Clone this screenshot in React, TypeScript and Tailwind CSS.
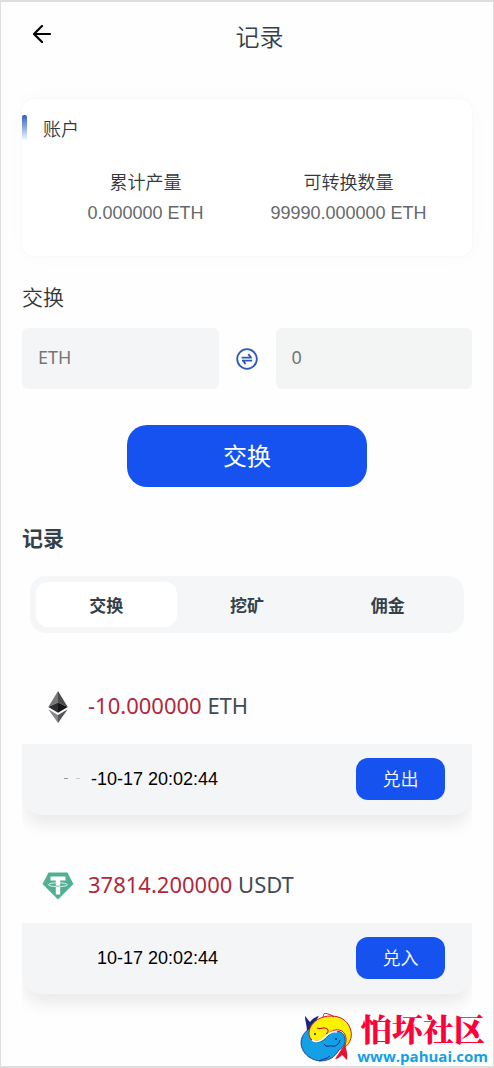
import React from "react";

type RecordItem = {
  id: string;
  amount: string;
  unit: string;
  time: string;
  action: string;
  icon: React.ReactNode;
  masked?: boolean;
};

function EthIcon() {
  return (
    <svg viewBox="0 0 20 32" className="h-8 w-5" aria-hidden="true">
      <path d="M10 0 0.3 16 10 11.6Z" fill="#77787a" />
      <path d="M10 0v11.6L19.7 16Z" fill="#4b4b4d" />
      <path d="M10 11.6 0.3 16 10 21.8Z" fill="#2e2e30" />
      <path d="M10 11.6 19.7 16 10 21.8Z" fill="#161618" />
      <path d="M0.3 18.2 10 24v8Z" fill="#858688" />
      <path d="M19.7 18.2 10 24v8Z" fill="#55565a" />
    </svg>
  );
}

function TetherIcon() {
  return (
    <svg viewBox="0 0 32 28" className="h-7 w-8" aria-hidden="true">
      <path d="M6.6 0.5h18.8L31.5 12 16 27.5 0.5 12Z" fill="#53ae94" />
      <path d="M8.5 4.5h15v4h-5.3v14h-4.4v-14H8.5Z" fill="#fff" />
      <ellipse cx="16" cy="12.7" rx="9.6" ry="1.9" fill="none" stroke="#fff" strokeWidth="0.8" />
      <path d="M13.8 14q2.2.3 4.4 0" fill="none" stroke="#53ae94" strokeWidth="0.8" />
    </svg>
  );
}

function SwapIcon() {
  return (
    <svg
      viewBox="0 0 22 22"
      className="size-[22px]"
      fill="none"
      stroke="#2a59b8"
      strokeWidth="1.8"
      aria-hidden="true"
    >
      <circle cx="11" cy="11" r="9.8" />
      <path d="M5.6 9.6h10.2M15.2 9.9l-2.8-3.8M16.2 12.6H6M6.8 12.3l2.8 3.8" />
    </svg>
  );
}

function FishLogo() {
  return (
    <svg viewBox="0 0 54 50" className="h-[50px] w-[54px]" aria-hidden="true">
      <path d="M6 3c2 2 3 4 5 6 2-3 5-5 9-6-3 4-4 8-7 13l-5 3C8 12 6 8 6 3Z" fill="#17277c" />
      <path
        d="M11 15C4 20 0 27 3 35c3 8 10 12 18 13 9 0 15-4 19-11 5-3 7-7 6-12-1-5-6-8-11-6-5 1-7 6-12 9-5 2-11 1-12-4-1-3-1-6 0-9Z"
        fill="#14a0e4"
        stroke="#17277c"
        strokeWidth="0.8"
      />
      <path
        d="M45 35c7-5 9-13 6-20C48 7 41 3 32 3c-10 0-18 5-21 12-2 6-1 11 4 13 5 1 9-1 12-5 4-4 8-7 13-6 7 1 9 10 5 18Z"
        fill="#fff200"
        stroke="#d4122c"
        strokeWidth="1"
      />
      <path
        d="M13 27c4 3 9 1 13-3 4-4 8-6 12-5"
        fill="none"
        stroke="#fff"
        strokeWidth="1.6"
      />
      <path d="M24 4c1-2 0-3 2-4 3 1 7 2 9 4" fill="none" stroke="#d4122c" strokeWidth="1" />
      <path d="M18 15c4 2 5-1 8 0 4 1 4 4 1 6" fill="none" stroke="#d4122c" strokeWidth="1.1" />
      <path d="M25 31c2 4 6 1 8 2 4 1 7-2 8-6" fill="none" stroke="#17277c" strokeWidth="1" />
      <path d="M20 48c3-2 8-2 11-5" fill="none" stroke="#17277c" strokeWidth="1" />
      <circle cx="16" cy="21" r="1.1" fill="#17277c" />
      <circle cx="37" cy="26" r="1.1" fill="#17277c" />
      <path d="M46 31c1 5 3 9 2 16-2-2-3-3-5-5-2 2-4 4-7 4 3-5 6-9 10-15Z" fill="#e6142d" />
    </svg>
  );
}

const records: RecordItem[] = [
  {
    id: "eth",
    amount: "-10.000000",
    unit: "ETH",
    time: "-10-17 20:02:44",
    action: "兑出",
    icon: <EthIcon />,
    masked: true,
  },
  {
    id: "usdt",
    amount: "37814.200000",
    unit: "USDT",
    time: "10-17 20:02:44",
    action: "兑入",
    icon: <TetherIcon />,
  },
];

const tabs = ["交换", "挖矿", "佣金"];

function Stat({ label, value }: { label: string; value: string }) {
  return (
    <div className="flex-1 text-center">
      <dt className="text-lg leading-8 text-[#33383c]">{label}</dt>
      <dd className="font-['Liberation_Sans',sans-serif] text-lg leading-8 font-normal text-[#66696c]">
        {value}
      </dd>
    </div>
  );
}

function RecordCard({ item }: { item: RecordItem }) {
  return (
    <li className="overflow-hidden pb-8">
      <div className="flex h-[76px] items-center gap-[14px] pl-5">
        <span className="flex w-8 justify-center pt-[2px]">{item.icon}</span>
        <p className="pb-[2px] font-['Noto_Sans',sans-serif] text-[22px] leading-8 font-normal text-[#414b54]">
          <span className="text-[#b0283c]">{item.amount}</span> {item.unit}
        </p>
      </div>
      <div className="flex h-[71px] items-center rounded-b-[20px] bg-[#f4f5f6] pr-[27px] pb-[2px] pl-[42px] shadow-[0_12px_16px_-2px_rgba(0,0,0,0.08)]">
        <span className="flex w-[27px] shrink-0 items-center gap-2" aria-hidden="true">
          {item.masked && (
            <>
              <i className="h-px w-1 bg-[#999]" />
              <i className="h-px w-1 bg-[#ccc]" />
            </>
          )}
        </span>
        <time className="w-[127px] text-right font-['Liberation_Sans',sans-serif] text-lg font-normal whitespace-nowrap text-black">
          {item.time}
        </time>
        <button
          type="button"
          className="ml-auto h-[42px] w-[89px] rounded-xl bg-[#1652f0] pb-[2px] text-lg font-[350] text-white"
        >
          {item.action}
        </button>
      </div>
    </li>
  );
}

export default function App() {
  return (
    <div className="relative min-h-screen border-x border-t-2 border-b-2 border-[#dedede] bg-[#fefefe] px-[21px] font-['Noto_Sans_CJK_SC',sans-serif] font-[350] text-[#33383c]">
      <header className="flex h-[68px] items-center">
        <button type="button" aria-label="返回" className="-mt-1 ml-[11px]">
          <svg
            viewBox="0 0 18 18"
            className="size-[18px]"
            fill="none"
            stroke="#000"
            strokeWidth="2.2"
            strokeLinecap="round"
            strokeLinejoin="round"
            aria-hidden="true"
          >
            <path d="M17 9H1M9 1 1 9l8 8" />
          </svg>
        </button>
        <h1 className="flex-1 pr-1 text-center text-2xl font-[350] text-[#33404a]">记录</h1>
      </header>

      <main>
        <section className="mt-[29px] flex h-[157px] flex-col rounded-xl bg-white shadow-[0_0_24px_rgba(0,0,0,0.02),0_0_2px_rgba(0,0,0,0.06)]">
          <div className="mt-4 flex gap-4">
            <span className="h-[26px] w-[5px] rounded-t-xs bg-linear-to-b from-[#2f5fc4] to-white" />
            <h2 className="text-lg leading-[26px] font-[350]">账户</h2>
          </div>
          <dl className="mt-6 flex px-[22px]">
            <Stat label="累计产量" value="0.000000 ETH" />
            <Stat label="可转换数量" value="99990.000000 ETH" />
          </dl>
        </section>

        <section className="mt-6">
          <h2 className="text-[21px] leading-8 font-[350]">交换</h2>
          <form onSubmit={(event) => event.preventDefault()}>
            <div className="mt-4 flex items-center">
              <input
                type="text"
                aria-label="币种"
                placeholder="ETH"
                className="h-[61px] min-w-0 flex-1 rounded-md bg-[#f4f5f6] px-4 pb-[4px] font-['Noto_Sans',sans-serif] text-lg font-normal placeholder:text-[#757575]"
              />
              <span className="flex w-[57px] justify-center">
                <SwapIcon />
              </span>
              <input
                type="text"
                aria-label="数量"
                placeholder="0"
                className="h-[61px] min-w-0 flex-1 rounded-md bg-[#f3f5f5] px-4 pb-[4px] font-['Noto_Sans',sans-serif] text-lg font-normal placeholder:text-[#757575]"
              />
            </div>
            <button
              type="submit"
              className="mx-auto mt-9 block h-[62px] w-60 rounded-[20px] bg-[#1652f0] pb-[2px] text-2xl font-normal text-white"
            >
              交换
            </button>
          </form>
        </section>

        <section className="mt-[34px]">
          <h2 className="text-[21px] leading-8 font-bold text-[#33404a]">记录</h2>
          <div role="tablist" className="mx-2 mt-[23px] flex h-[57px] rounded-2xl bg-[#f4f6f7] p-[6px]">
            {tabs.map((tab, index) => (
              <button
                key={tab}
                type="button"
                role="tab"
                aria-selected={index === 0}
                className="flex-1 rounded-xl text-[17px] font-bold text-[#33404a] aria-selected:bg-white"
              >
                {tab}
              </button>
            ))}
          </div>
          <ul className="mt-[35px] flex flex-col pb-9">
            {records.map((item) => (
              <RecordCard key={item.id} item={item} />
            ))}
          </ul>
        </section>
      </main>

      <aside className="absolute right-[5px] bottom-0 flex items-center gap-1">
        <FishLogo />
        <div className="text-center">
          <p className="font-['Noto_Serif_CJK_SC','Noto_Sans_CJK_SC',serif] text-[31px] leading-9 font-black text-[#ff0038]">
            怕坏社区
          </p>
          <p className="font-['Open_Sans',sans-serif] text-[15px] leading-5 font-bold text-[#14a0e4]">
            www.pahuai.com
          </p>
        </div>
      </aside>
    </div>
  );
}
